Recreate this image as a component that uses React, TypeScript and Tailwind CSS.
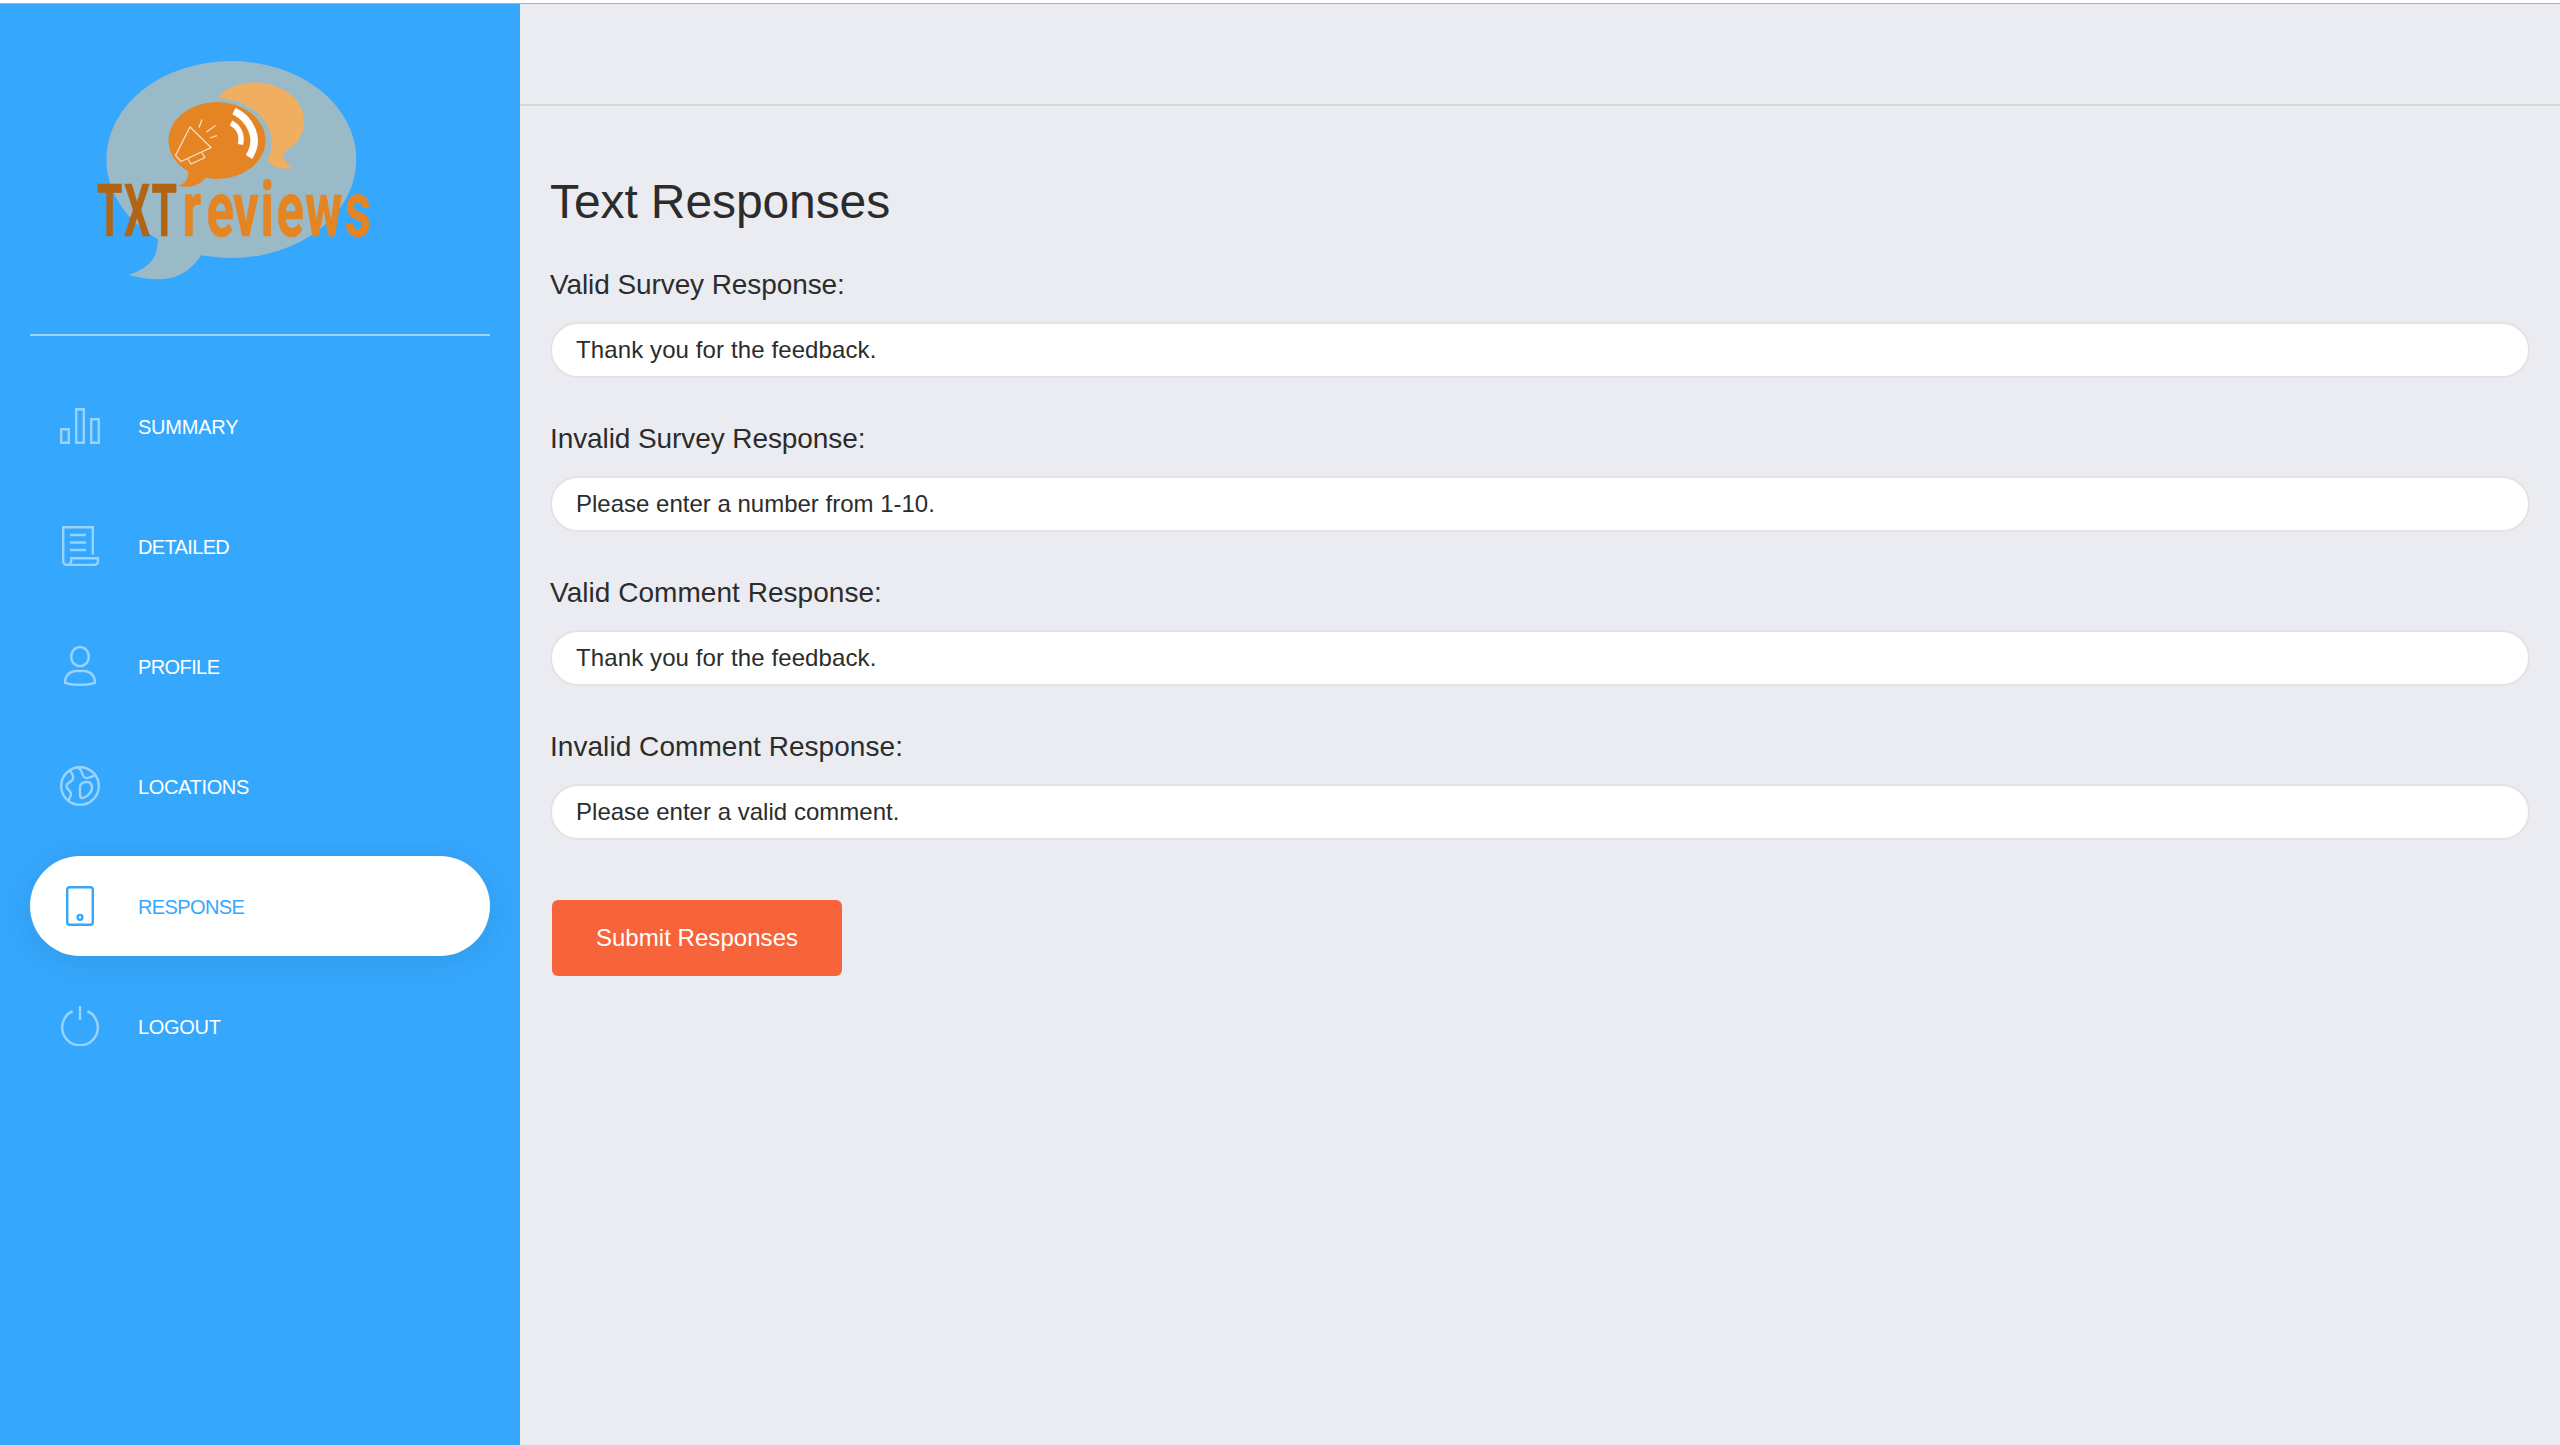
import React from "react";

const items: { name: string; tracking: string; icon: React.ReactNode }[] = [
  {
    name: "SUMMARY",
    tracking: "tracking-[-0.23px]",
    icon: <path d="M1.250 23.250h7.500v13.500h-7.500zM16.250 3.250h7.500v33.500h-7.500zM31.250 13.250h7.500v23.500h-7.500z" />,
  },
  {
    name: "DETAILED",
    tracking: "tracking-[-0.65px]",
    icon: (
      <>
        <path d="M32.800 28.700V1.200H3.200V35a4 4 0 0 0 4 4H34a4 4 0 0 0 4-4v-2.800H11.200V35a4 4 0 0 1-4 4" />
        <path d="M10 9h16M10 16.500h16M10 24h16" />
      </>
    ),
  },
  {
    name: "PROFILE",
    tracking: "tracking-[-0.6px]",
    icon: (
      <>
        <ellipse cx="20" cy="10.600" rx="8.900" ry="9.500" />
        <path d="M5 36.600C5 30 9.500 25 16 25h8c6.500 0 11 5 11 11.600C29 39.500 11 39.500 5 36.600z" />
      </>
    ),
  },
  {
    name: "LOCATIONS",
    tracking: "tracking-[-0.35px]",
    icon: (
      <>
        <circle cx="20" cy="20" r="18.800" />
        <path d="M9.500 4.500C12 7 14 9.500 13 13 12 16 6 16.500 6.500 20.500 7 24 11 24.500 11 28c0 3-2.500 4-2 6.500" />
        <path d="M17.500 1.500c2.500 1 3.800 2.500 4.500 5.500.8 3 3 5.500 5.500 5 3-.800 4.500-1 7.500-3" />
        <path d="M20 21c0-4 4-5 7-5s5 2 5 6c0 5.500-7 10-10 10-2.500 0-2-4-2-11z" />
      </>
    ),
  },
  {
    name: "RESPONSE",
    tracking: "tracking-[-0.6px]",
    icon: (
      <>
        <rect x="7.200" y="1.200" width="25.600" height="37.600" rx="2.500" />
        <circle cx="20" cy="31.300" r="2.400" />
      </>
    ),
  },
  {
    name: "LOGOUT",
    tracking: "tracking-[-0.3px]",
    icon: <path d="M12.600 5.200a17.800 17.800 0 1 0 14.800 0M20 0v14" />,
  },
];

const fields = [
  { label: "Valid Survey Response:", labelTracking: "tracking-[-0.09px]", value: "Thank you for the feedback.", tracking: "tracking-[0.11px]" },
  { label: "Invalid Survey Response:", labelTracking: "tracking-[-0.09px]", value: "Please enter a number from 1-10.", tracking: "tracking-[0px]" },
  { label: "Valid Comment Response:", labelTracking: "tracking-[0.04px]", value: "Thank you for the feedback.", tracking: "tracking-[0.11px]" },
  { label: "Invalid Comment Response:", labelTracking: "tracking-[0.05px]", value: "Please enter a valid comment.", tracking: "tracking-[0.02px]" },
];

function Logo() {
  return (
    <svg
      viewBox="0 0 310 260"
      className="ml-[80px] mt-[36px] block h-[260px] w-[310px] shrink-0"
      style={{ fontFamily: "Roboto, sans-serif" }}
    >
      <g fill="#9abac8">
        <ellipse cx="151.300" cy="119.500" rx="125" ry="98.500" />
        <path d="M78 195C78 213 76 225 49 235C80 243 104 242 122 214z" />
      </g>
      <path
        fill="#f0af60"
        d="M137 57.500C149 46 163 42.500 174 42.500C203 42.500 224 60 224 81C224 97 214 107 203.500 112.500C203 120 207 125 213.500 127C204 130 193 129 187 120C191 114 192 107 191.500 99C189 78 169 60 137 57.500z"
      />
      <g fill="#e58423">
        <ellipse cx="137" cy="100.500" rx="48.500" ry="38.500" />
        <path d="M108 129C109 137 107 143 98 146C108 148 119 147 126 137z" />
      </g>
      <g fill="none" stroke="#fff">
        <path strokeWidth="7.500" d="M154 71C170 79 181 98 169 117" />
        <path strokeWidth="5.500" d="M151 83C159 87 162.500 95 160.500 104.500" />
        <path
          strokeWidth="1.300"
          stroke="#fcdcc0"
          d="M110 87L131 107.500L101 121.500L95.500 115.500zM107.500 118.500L111 124L125 117.500L121.500 112M119 87.500L122 79.500M126.500 92L135.500 85.500M130 98L137 95.700"
        />
      </g>
      <text
        x="30 77 125.6"
        y="0"
        transform="translate(0 195.5) scale(0.57 1)"
        fill="#b06514"
        stroke="#b06514"
        strokeWidth="0.6"
        fontSize="72"
        fontWeight="700"
      >
        TXT
      </text>
      <text
        x="155.500 191.700 232 273.500 297.700 341 401"
        y="0"
        transform="translate(0 195.8) scale(0.66 1)"
        fill="#e58423"
        stroke="#e58423"
        strokeWidth="0.6"
        fontSize="77"
        fontWeight="700"
      >
        reviews
      </text>
    </svg>
  );
}

export default function App() {
  return (
    <div className="flex h-[1445px] w-[2560px] flex-col overflow-hidden bg-white font-['Liberation_Sans',Arial,sans-serif] text-[#2c2c2c]">
      <div className="h-1 shrink-0 border-b border-[#b0b0b2]" />
      <div className="flex min-h-0 flex-1">
        <aside className="flex w-[520px] shrink-0 flex-col bg-[#35a8fe]">
          <Logo />
          <div className="mx-[30px] mt-[34px] h-[2px] shrink-0 bg-white/50" />
          <nav className="mx-[30px] mt-10 flex flex-col gap-5">
            {items.map(({ name, tracking, icon }) => {
              const active = name === "RESPONSE";
              return (
                <a
                  key={name}
                  className={
                    active
                      ? "flex h-[100px] items-center rounded-full bg-white pl-[30px] text-[#35a8fe] shadow-[0_4px_30px_rgba(39,39,39,0.12)]"
                      : "flex h-[100px] items-center pl-[30px] text-white"
                  }
                >
                  <svg
                    viewBox="0 0 40 40"
                    fill="none"
                    stroke="currentColor"
                    strokeWidth="2.4"
                    className={active ? "h-10 w-10" : "h-10 w-10 opacity-50"}
                  >
                    {icon}
                  </svg>
                  <span className={`ml-[38px] pt-[2px] text-[20px] leading-[30px] ${tracking}`}>{name}</span>
                </a>
              );
            })}
          </nav>
        </aside>
        <main className="flex flex-1 flex-col bg-[#ebecf1]">
          <header className="h-[102px] shrink-0 border-b-2 border-[#d4d5d9]" />
          <form className="flex flex-col items-start px-[30px] pt-[66px]">
            <h1 className="text-[48px] leading-[60px] tracking-[-0.1px]">Text Responses</h1>
            {fields.map((f, i) => (
              <label key={i} className="mt-[34px] flex h-[120px] w-full flex-col first-of-type:mt-[26px]">
                <span className={`h-16 text-[28px] leading-[53px] ${f.labelTracking}`}>{f.label}</span>
                <input
                  readOnly
                  value={f.value}
                  className={`h-14 w-full rounded-full border-2 border-[#e3e3e3] bg-white px-6 text-[24px] outline-none ${f.tracking}`}
                />
              </label>
            ))}
            <button
              type="button"
              className="ml-[2px] mt-[60px] h-[76px] w-[290px] rounded-[6px] bg-[#f7643b] text-[24px] tracking-[0.05px] text-white"
            >
              Submit Responses
            </button>
          </form>
        </main>
      </div>
    </div>
  );
}
